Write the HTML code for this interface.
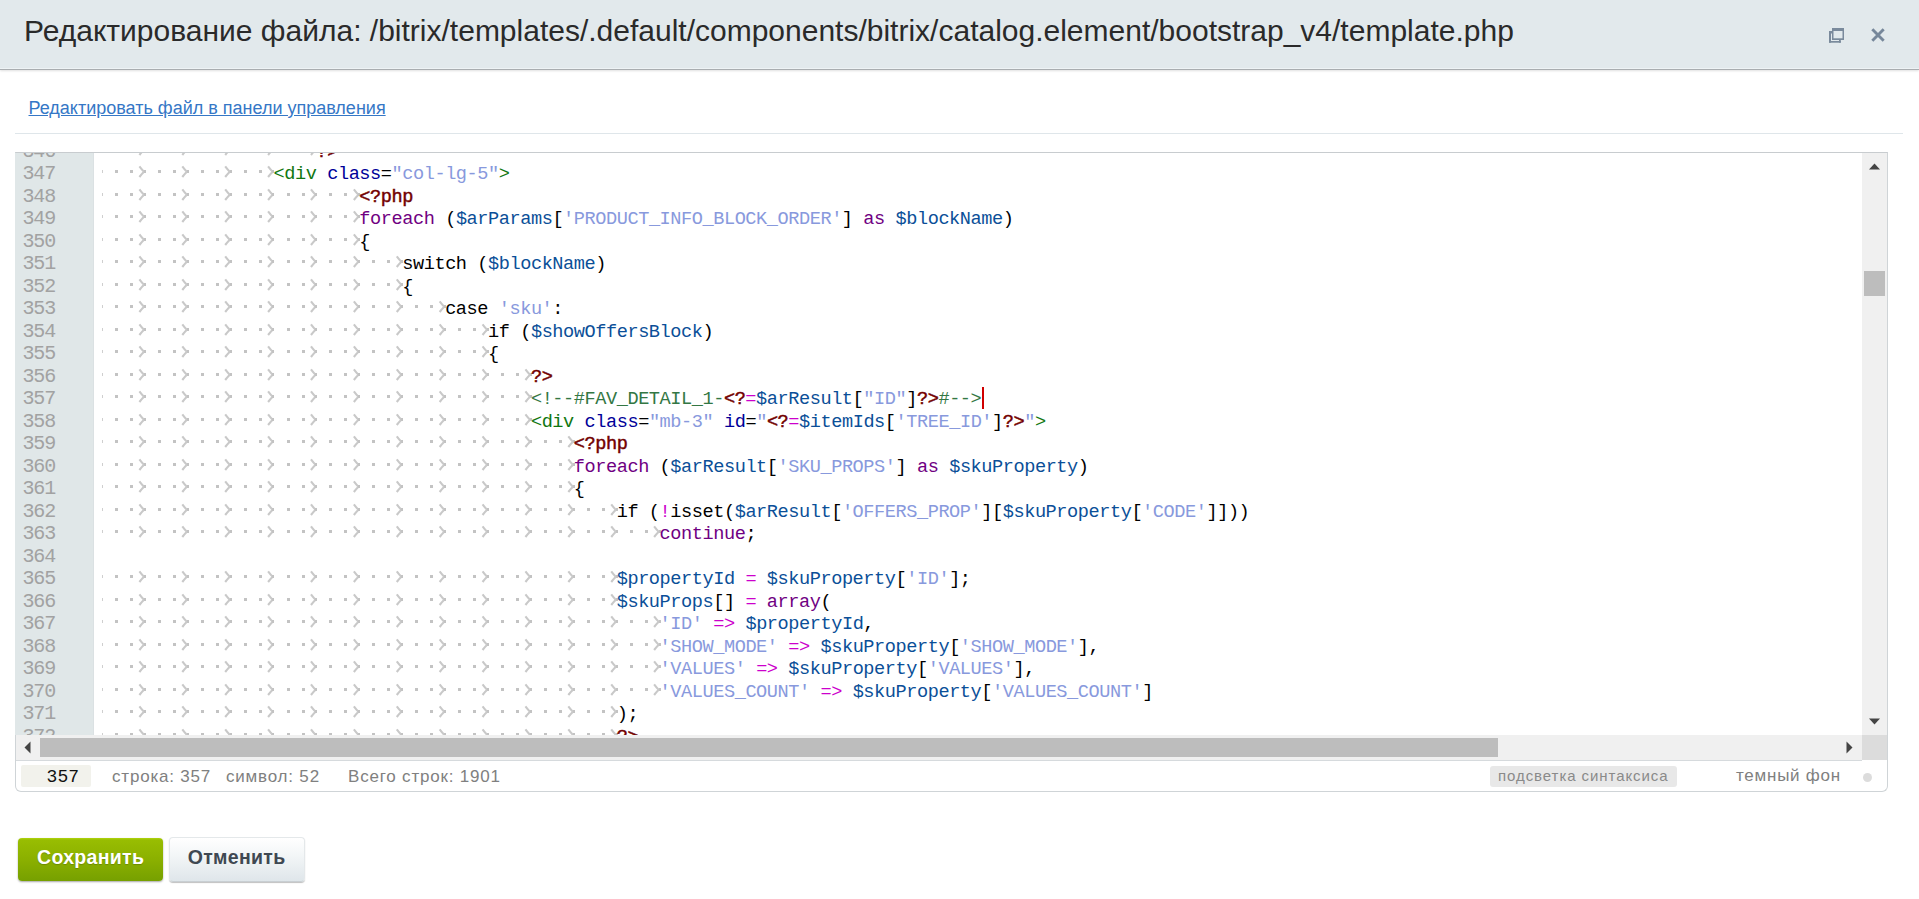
<!DOCTYPE html>
<html><head><meta charset="utf-8"><style>
html,body{margin:0;padding:0;background:#fff;width:1919px;height:899px;overflow:hidden;position:relative;font-family:"Liberation Sans",sans-serif}
.hdr{position:absolute;left:0;top:0;width:1919px;height:69px;background:#e2e9ec;border-bottom:1px solid #a9adb0;box-shadow:0 1px 2px rgba(0,0,0,0.12), inset 0 -1px 0 #eef3f5}
.title{position:absolute;left:24px;top:13px;font-size:30px;color:#2a2a2a;white-space:nowrap;line-height:36px}
.link{position:absolute;left:28.5px;top:97px;font-size:18px;color:#3577c6;text-decoration:underline;white-space:nowrap;line-height:22px}
.sep{position:absolute;left:15px;top:133px;width:1888px;height:1px;background:#dfe6ea}
.ed{position:absolute;left:15px;top:152px;width:1873px;height:640px;border:1px solid #cfd4d7;border-top-color:#c8cccf;border-radius:0 0 6px 6px;box-sizing:border-box;overflow:hidden}
.view{position:absolute;left:15px;top:153px;width:1847px;height:582px;overflow:hidden}
.gutter{position:absolute;left:0;top:0;width:79px;height:582px;background:#e0e7e8;box-shadow:inset -1px 0 0 #dbe1e3}
.gn{position:absolute;left:7.5px;font-family:"Liberation Mono",monospace;font-size:20px;letter-spacing:-1.15px;color:#a2a2a2;line-height:22.5px;height:22.5px}
.ar{fill:none;stroke:#c9c9c9;stroke-width:2.1}
.ln{position:absolute;white-space:pre;font-family:"Liberation Mono",monospace;font-size:18.6px;letter-spacing:-0.437px;line-height:22.5px;height:22.5px;color:#000}
.tag{color:#117711} .attr{color:#000099} .str{color:#8899dd} .php{color:#720000;-webkit-text-stroke:0.45px #720000} .kw{color:#700082} .var{color:#0b4f98} .op{color:#cc00cc} .p{color:#000} .cm{color:#337744}
.vs{position:absolute;left:1862px;top:153px;width:25px;height:582px;background:#f0f0f0}
.hs{position:absolute;left:16px;top:735px;width:1846px;height:25px;background:#f0f0f0;border-bottom:1px solid #d6dadd}
.corner{position:absolute;left:1862px;top:735px;width:25px;height:25px;background:#dcdcdc}
.status{position:absolute;left:16px;top:760px;width:1870px;height:31px}
.btn{position:absolute;font-weight:bold;font-size:19.5px;text-align:center;border-radius:4px;line-height:38px;letter-spacing:0.3px;text-indent:0.3px;box-sizing:border-box}
.save{left:18px;top:838px;width:145px;height:43px;color:#fff;background:linear-gradient(#b0d40c 0px,#98bd02 2px,#8bb000 50%,#76a000);box-shadow:0 1px 2px rgba(0,0,0,0.35);text-shadow:0 1px 1px rgba(0,0,0,0.2)}
.cancel{left:168.5px;top:837px;width:136px;height:45px;color:#3f4852;background:linear-gradient(#ffffff,#f3f6f7 40%,#dfe6ea);border:1px solid #e4e8ea;border-bottom-color:#c9cfd3;box-shadow:0 1px 1px rgba(0,0,0,0.25);padding-top:0px}
.stbox{position:absolute;left:21px;top:765px;width:70px;height:22px;background:#f2f2ec;border-radius:2px;font-family:"Liberation Mono",monospace;font-size:18px;line-height:24px;color:#111;text-align:right;box-sizing:border-box;padding-right:12px}
.st{position:absolute;top:766px;font-size:17px;line-height:22px;color:#808080;white-space:nowrap;letter-spacing:0.8px}
.hl{position:absolute;left:1490px;top:766px;width:187px;height:21px;background:#e8e8e8;border-radius:3px;font-size:15px;line-height:19px;color:#8a8a8a;box-sizing:border-box;padding-left:8px;letter-spacing:0.93px;white-space:nowrap}
</style></head><body>
<div class="hdr"><div class="title">Редактирование файла: /bitrix/templates/.default/components/bitrix/catalog.element/bootstrap_v4/template.php</div>
<svg style="position:absolute;left:1828px;top:27px" width="18" height="17"><g fill="#7a8a9c"><rect x="4" y="1" width="12" height="3"/><rect x="4" y="1" width="1.5" height="12"/><rect x="14.5" y="1" width="1.5" height="12"/><rect x="4" y="11.3" width="12" height="1.7"/><rect x="1" y="4" width="2" height="11.7"/><rect x="1" y="14" width="11.8" height="1.7"/><rect x="11" y="13" width="1.8" height="2.7"/><rect x="1" y="4" width="3" height="2.5"/></g></svg>
<svg style="position:absolute;left:1868px;top:25px" width="20" height="20"><path d="M4.3 4.3 L15.7 15.7 M15.7 4.3 L4.3 15.7" stroke="#76879a" stroke-width="2.9"/></svg>
</div>
<div class="link">Редактировать файл в панели управления</div>
<div class="sep"></div>
<div class="ed"></div>
<div class="view">
<div class="gutter"></div>
<div class="gn" style="top:-12px">346</div><div class="gn" style="top:10px">347</div><div class="gn" style="top:33px">348</div><div class="gn" style="top:55px">349</div><div class="gn" style="top:78px">350</div><div class="gn" style="top:100px">351</div><div class="gn" style="top:123px">352</div><div class="gn" style="top:145px">353</div><div class="gn" style="top:168px">354</div><div class="gn" style="top:190px">355</div><div class="gn" style="top:213px">356</div><div class="gn" style="top:235px">357</div><div class="gn" style="top:258px">358</div><div class="gn" style="top:280px">359</div><div class="gn" style="top:303px">360</div><div class="gn" style="top:325px">361</div><div class="gn" style="top:348px">362</div><div class="gn" style="top:370px">363</div><div class="gn" style="top:393px">364</div><div class="gn" style="top:415px">365</div><div class="gn" style="top:438px">366</div><div class="gn" style="top:460px">367</div><div class="gn" style="top:483px">368</div><div class="gn" style="top:505px">369</div><div class="gn" style="top:528px">370</div><div class="gn" style="top:550px">371</div><div class="gn" style="top:573px">372</div>
<svg style="position:absolute;left:0;top:0" width="1847" height="582"><g fill="#c3c3c3"><rect x="87" y="-5" width="1" height="3" fill="#cfcfcf"/><rect x="100" y="-5" width="3" height="3"/><rect x="115" y="-5" width="3" height="3"/><path d="M124.40 -8.60 Q126.80 -5.40 129.00 -3.30 Q126.80 -1.20 124.40 2.00" class="ar"/><rect x="129" y="-5" width="2" height="3"/><rect x="143" y="-5" width="3" height="3"/><rect x="158" y="-5" width="3" height="3"/><path d="M167.29 -8.60 Q169.69 -5.40 171.89 -3.30 Q169.69 -1.20 167.29 2.00" class="ar"/><rect x="172" y="-5" width="2" height="3"/><rect x="186" y="-5" width="3" height="3"/><rect x="201" y="-5" width="3" height="3"/><path d="M210.19 -8.60 Q212.59 -5.40 214.79 -3.30 Q212.59 -1.20 210.19 2.00" class="ar"/><rect x="215" y="-5" width="2" height="3"/><rect x="229" y="-5" width="3" height="3"/><rect x="244" y="-5" width="3" height="3"/><path d="M253.08 -8.60 Q255.48 -5.40 257.68 -3.30 Q255.48 -1.20 253.08 2.00" class="ar"/><rect x="257" y="-5" width="2" height="3"/><rect x="272" y="-5" width="3" height="3"/><rect x="287" y="-5" width="3" height="3"/><path d="M295.97 -8.60 Q298.37 -5.40 300.57 -3.30 Q298.37 -1.20 295.97 2.00" class="ar"/><rect x="300" y="-5" width="2" height="3"/><rect x="87" y="17" width="1" height="3" fill="#cfcfcf"/><rect x="100" y="17" width="3" height="3"/><rect x="115" y="17" width="3" height="3"/><path d="M124.40 13.40 Q126.80 16.60 129.00 18.70 Q126.80 20.80 124.40 24.00" class="ar"/><rect x="129" y="17" width="2" height="3"/><rect x="143" y="17" width="3" height="3"/><rect x="158" y="17" width="3" height="3"/><path d="M167.29 13.40 Q169.69 16.60 171.89 18.70 Q169.69 20.80 167.29 24.00" class="ar"/><rect x="172" y="17" width="2" height="3"/><rect x="186" y="17" width="3" height="3"/><rect x="201" y="17" width="3" height="3"/><path d="M210.19 13.40 Q212.59 16.60 214.79 18.70 Q212.59 20.80 210.19 24.00" class="ar"/><rect x="215" y="17" width="2" height="3"/><rect x="229" y="17" width="3" height="3"/><rect x="244" y="17" width="3" height="3"/><path d="M253.08 13.40 Q255.48 16.60 257.68 18.70 Q255.48 20.80 253.08 24.00" class="ar"/><rect x="257" y="17" width="2" height="3"/><rect x="87" y="40" width="1" height="3" fill="#cfcfcf"/><rect x="100" y="40" width="3" height="3"/><rect x="115" y="40" width="3" height="3"/><path d="M124.40 36.40 Q126.80 39.60 129.00 41.70 Q126.80 43.80 124.40 47.00" class="ar"/><rect x="129" y="40" width="2" height="3"/><rect x="143" y="40" width="3" height="3"/><rect x="158" y="40" width="3" height="3"/><path d="M167.29 36.40 Q169.69 39.60 171.89 41.70 Q169.69 43.80 167.29 47.00" class="ar"/><rect x="172" y="40" width="2" height="3"/><rect x="186" y="40" width="3" height="3"/><rect x="201" y="40" width="3" height="3"/><path d="M210.19 36.40 Q212.59 39.60 214.79 41.70 Q212.59 43.80 210.19 47.00" class="ar"/><rect x="215" y="40" width="2" height="3"/><rect x="229" y="40" width="3" height="3"/><rect x="244" y="40" width="3" height="3"/><path d="M253.08 36.40 Q255.48 39.60 257.68 41.70 Q255.48 43.80 253.08 47.00" class="ar"/><rect x="257" y="40" width="2" height="3"/><rect x="272" y="40" width="3" height="3"/><rect x="287" y="40" width="3" height="3"/><path d="M295.97 36.40 Q298.37 39.60 300.57 41.70 Q298.37 43.80 295.97 47.00" class="ar"/><rect x="300" y="40" width="2" height="3"/><rect x="314" y="40" width="3" height="3"/><rect x="329" y="40" width="3" height="3"/><path d="M338.86 36.40 Q341.26 39.60 343.46 41.70 Q341.26 43.80 338.86 47.00" class="ar"/><rect x="343" y="40" width="2" height="3"/><rect x="87" y="62" width="1" height="3" fill="#cfcfcf"/><rect x="100" y="62" width="3" height="3"/><rect x="115" y="62" width="3" height="3"/><path d="M124.40 58.40 Q126.80 61.60 129.00 63.70 Q126.80 65.80 124.40 69.00" class="ar"/><rect x="129" y="62" width="2" height="3"/><rect x="143" y="62" width="3" height="3"/><rect x="158" y="62" width="3" height="3"/><path d="M167.29 58.40 Q169.69 61.60 171.89 63.70 Q169.69 65.80 167.29 69.00" class="ar"/><rect x="172" y="62" width="2" height="3"/><rect x="186" y="62" width="3" height="3"/><rect x="201" y="62" width="3" height="3"/><path d="M210.19 58.40 Q212.59 61.60 214.79 63.70 Q212.59 65.80 210.19 69.00" class="ar"/><rect x="215" y="62" width="2" height="3"/><rect x="229" y="62" width="3" height="3"/><rect x="244" y="62" width="3" height="3"/><path d="M253.08 58.40 Q255.48 61.60 257.68 63.70 Q255.48 65.80 253.08 69.00" class="ar"/><rect x="257" y="62" width="2" height="3"/><rect x="272" y="62" width="3" height="3"/><rect x="287" y="62" width="3" height="3"/><path d="M295.97 58.40 Q298.37 61.60 300.57 63.70 Q298.37 65.80 295.97 69.00" class="ar"/><rect x="300" y="62" width="2" height="3"/><rect x="314" y="62" width="3" height="3"/><rect x="329" y="62" width="3" height="3"/><path d="M338.86 58.40 Q341.26 61.60 343.46 63.70 Q341.26 65.80 338.86 69.00" class="ar"/><rect x="343" y="62" width="2" height="3"/><rect x="87" y="85" width="1" height="3" fill="#cfcfcf"/><rect x="100" y="85" width="3" height="3"/><rect x="115" y="85" width="3" height="3"/><path d="M124.40 81.40 Q126.80 84.60 129.00 86.70 Q126.80 88.80 124.40 92.00" class="ar"/><rect x="129" y="85" width="2" height="3"/><rect x="143" y="85" width="3" height="3"/><rect x="158" y="85" width="3" height="3"/><path d="M167.29 81.40 Q169.69 84.60 171.89 86.70 Q169.69 88.80 167.29 92.00" class="ar"/><rect x="172" y="85" width="2" height="3"/><rect x="186" y="85" width="3" height="3"/><rect x="201" y="85" width="3" height="3"/><path d="M210.19 81.40 Q212.59 84.60 214.79 86.70 Q212.59 88.80 210.19 92.00" class="ar"/><rect x="215" y="85" width="2" height="3"/><rect x="229" y="85" width="3" height="3"/><rect x="244" y="85" width="3" height="3"/><path d="M253.08 81.40 Q255.48 84.60 257.68 86.70 Q255.48 88.80 253.08 92.00" class="ar"/><rect x="257" y="85" width="2" height="3"/><rect x="272" y="85" width="3" height="3"/><rect x="287" y="85" width="3" height="3"/><path d="M295.97 81.40 Q298.37 84.60 300.57 86.70 Q298.37 88.80 295.97 92.00" class="ar"/><rect x="300" y="85" width="2" height="3"/><rect x="314" y="85" width="3" height="3"/><rect x="329" y="85" width="3" height="3"/><path d="M338.86 81.40 Q341.26 84.60 343.46 86.70 Q341.26 88.80 338.86 92.00" class="ar"/><rect x="343" y="85" width="2" height="3"/><rect x="87" y="107" width="1" height="3" fill="#cfcfcf"/><rect x="100" y="107" width="3" height="3"/><rect x="115" y="107" width="3" height="3"/><path d="M124.40 103.40 Q126.80 106.60 129.00 108.70 Q126.80 110.80 124.40 114.00" class="ar"/><rect x="129" y="107" width="2" height="3"/><rect x="143" y="107" width="3" height="3"/><rect x="158" y="107" width="3" height="3"/><path d="M167.29 103.40 Q169.69 106.60 171.89 108.70 Q169.69 110.80 167.29 114.00" class="ar"/><rect x="172" y="107" width="2" height="3"/><rect x="186" y="107" width="3" height="3"/><rect x="201" y="107" width="3" height="3"/><path d="M210.19 103.40 Q212.59 106.60 214.79 108.70 Q212.59 110.80 210.19 114.00" class="ar"/><rect x="215" y="107" width="2" height="3"/><rect x="229" y="107" width="3" height="3"/><rect x="244" y="107" width="3" height="3"/><path d="M253.08 103.40 Q255.48 106.60 257.68 108.70 Q255.48 110.80 253.08 114.00" class="ar"/><rect x="257" y="107" width="2" height="3"/><rect x="272" y="107" width="3" height="3"/><rect x="287" y="107" width="3" height="3"/><path d="M295.97 103.40 Q298.37 106.60 300.57 108.70 Q298.37 110.80 295.97 114.00" class="ar"/><rect x="300" y="107" width="2" height="3"/><rect x="314" y="107" width="3" height="3"/><rect x="329" y="107" width="3" height="3"/><path d="M338.86 103.40 Q341.26 106.60 343.46 108.70 Q341.26 110.80 338.86 114.00" class="ar"/><rect x="343" y="107" width="2" height="3"/><rect x="357" y="107" width="3" height="3"/><rect x="372" y="107" width="3" height="3"/><path d="M381.76 103.40 Q384.16 106.60 386.36 108.70 Q384.16 110.80 381.76 114.00" class="ar"/><rect x="386" y="107" width="2" height="3"/><rect x="87" y="130" width="1" height="3" fill="#cfcfcf"/><rect x="100" y="130" width="3" height="3"/><rect x="115" y="130" width="3" height="3"/><path d="M124.40 126.40 Q126.80 129.60 129.00 131.70 Q126.80 133.80 124.40 137.00" class="ar"/><rect x="129" y="130" width="2" height="3"/><rect x="143" y="130" width="3" height="3"/><rect x="158" y="130" width="3" height="3"/><path d="M167.29 126.40 Q169.69 129.60 171.89 131.70 Q169.69 133.80 167.29 137.00" class="ar"/><rect x="172" y="130" width="2" height="3"/><rect x="186" y="130" width="3" height="3"/><rect x="201" y="130" width="3" height="3"/><path d="M210.19 126.40 Q212.59 129.60 214.79 131.70 Q212.59 133.80 210.19 137.00" class="ar"/><rect x="215" y="130" width="2" height="3"/><rect x="229" y="130" width="3" height="3"/><rect x="244" y="130" width="3" height="3"/><path d="M253.08 126.40 Q255.48 129.60 257.68 131.70 Q255.48 133.80 253.08 137.00" class="ar"/><rect x="257" y="130" width="2" height="3"/><rect x="272" y="130" width="3" height="3"/><rect x="287" y="130" width="3" height="3"/><path d="M295.97 126.40 Q298.37 129.60 300.57 131.70 Q298.37 133.80 295.97 137.00" class="ar"/><rect x="300" y="130" width="2" height="3"/><rect x="314" y="130" width="3" height="3"/><rect x="329" y="130" width="3" height="3"/><path d="M338.86 126.40 Q341.26 129.60 343.46 131.70 Q341.26 133.80 338.86 137.00" class="ar"/><rect x="343" y="130" width="2" height="3"/><rect x="357" y="130" width="3" height="3"/><rect x="372" y="130" width="3" height="3"/><path d="M381.76 126.40 Q384.16 129.60 386.36 131.70 Q384.16 133.80 381.76 137.00" class="ar"/><rect x="386" y="130" width="2" height="3"/><rect x="87" y="152" width="1" height="3" fill="#cfcfcf"/><rect x="100" y="152" width="3" height="3"/><rect x="115" y="152" width="3" height="3"/><path d="M124.40 148.40 Q126.80 151.60 129.00 153.70 Q126.80 155.80 124.40 159.00" class="ar"/><rect x="129" y="152" width="2" height="3"/><rect x="143" y="152" width="3" height="3"/><rect x="158" y="152" width="3" height="3"/><path d="M167.29 148.40 Q169.69 151.60 171.89 153.70 Q169.69 155.80 167.29 159.00" class="ar"/><rect x="172" y="152" width="2" height="3"/><rect x="186" y="152" width="3" height="3"/><rect x="201" y="152" width="3" height="3"/><path d="M210.19 148.40 Q212.59 151.60 214.79 153.70 Q212.59 155.80 210.19 159.00" class="ar"/><rect x="215" y="152" width="2" height="3"/><rect x="229" y="152" width="3" height="3"/><rect x="244" y="152" width="3" height="3"/><path d="M253.08 148.40 Q255.48 151.60 257.68 153.70 Q255.48 155.80 253.08 159.00" class="ar"/><rect x="257" y="152" width="2" height="3"/><rect x="272" y="152" width="3" height="3"/><rect x="287" y="152" width="3" height="3"/><path d="M295.97 148.40 Q298.37 151.60 300.57 153.70 Q298.37 155.80 295.97 159.00" class="ar"/><rect x="300" y="152" width="2" height="3"/><rect x="314" y="152" width="3" height="3"/><rect x="329" y="152" width="3" height="3"/><path d="M338.86 148.40 Q341.26 151.60 343.46 153.70 Q341.26 155.80 338.86 159.00" class="ar"/><rect x="343" y="152" width="2" height="3"/><rect x="357" y="152" width="3" height="3"/><rect x="372" y="152" width="3" height="3"/><path d="M381.76 148.40 Q384.16 151.60 386.36 153.70 Q384.16 155.80 381.76 159.00" class="ar"/><rect x="386" y="152" width="2" height="3"/><rect x="400" y="152" width="3" height="3"/><rect x="415" y="152" width="3" height="3"/><path d="M424.65 148.40 Q427.05 151.60 429.25 153.70 Q427.05 155.80 424.65 159.00" class="ar"/><rect x="429" y="152" width="2" height="3"/><rect x="87" y="175" width="1" height="3" fill="#cfcfcf"/><rect x="100" y="175" width="3" height="3"/><rect x="115" y="175" width="3" height="3"/><path d="M124.40 171.40 Q126.80 174.60 129.00 176.70 Q126.80 178.80 124.40 182.00" class="ar"/><rect x="129" y="175" width="2" height="3"/><rect x="143" y="175" width="3" height="3"/><rect x="158" y="175" width="3" height="3"/><path d="M167.29 171.40 Q169.69 174.60 171.89 176.70 Q169.69 178.80 167.29 182.00" class="ar"/><rect x="172" y="175" width="2" height="3"/><rect x="186" y="175" width="3" height="3"/><rect x="201" y="175" width="3" height="3"/><path d="M210.19 171.40 Q212.59 174.60 214.79 176.70 Q212.59 178.80 210.19 182.00" class="ar"/><rect x="215" y="175" width="2" height="3"/><rect x="229" y="175" width="3" height="3"/><rect x="244" y="175" width="3" height="3"/><path d="M253.08 171.40 Q255.48 174.60 257.68 176.70 Q255.48 178.80 253.08 182.00" class="ar"/><rect x="257" y="175" width="2" height="3"/><rect x="272" y="175" width="3" height="3"/><rect x="287" y="175" width="3" height="3"/><path d="M295.97 171.40 Q298.37 174.60 300.57 176.70 Q298.37 178.80 295.97 182.00" class="ar"/><rect x="300" y="175" width="2" height="3"/><rect x="314" y="175" width="3" height="3"/><rect x="329" y="175" width="3" height="3"/><path d="M338.86 171.40 Q341.26 174.60 343.46 176.70 Q341.26 178.80 338.86 182.00" class="ar"/><rect x="343" y="175" width="2" height="3"/><rect x="357" y="175" width="3" height="3"/><rect x="372" y="175" width="3" height="3"/><path d="M381.76 171.40 Q384.16 174.60 386.36 176.70 Q384.16 178.80 381.76 182.00" class="ar"/><rect x="386" y="175" width="2" height="3"/><rect x="400" y="175" width="3" height="3"/><rect x="415" y="175" width="3" height="3"/><path d="M424.65 171.40 Q427.05 174.60 429.25 176.70 Q427.05 178.80 424.65 182.00" class="ar"/><rect x="429" y="175" width="2" height="3"/><rect x="443" y="175" width="3" height="3"/><rect x="458" y="175" width="3" height="3"/><path d="M467.54 171.40 Q469.94 174.60 472.14 176.70 Q469.94 178.80 467.54 182.00" class="ar"/><rect x="472" y="175" width="2" height="3"/><rect x="87" y="197" width="1" height="3" fill="#cfcfcf"/><rect x="100" y="197" width="3" height="3"/><rect x="115" y="197" width="3" height="3"/><path d="M124.40 193.40 Q126.80 196.60 129.00 198.70 Q126.80 200.80 124.40 204.00" class="ar"/><rect x="129" y="197" width="2" height="3"/><rect x="143" y="197" width="3" height="3"/><rect x="158" y="197" width="3" height="3"/><path d="M167.29 193.40 Q169.69 196.60 171.89 198.70 Q169.69 200.80 167.29 204.00" class="ar"/><rect x="172" y="197" width="2" height="3"/><rect x="186" y="197" width="3" height="3"/><rect x="201" y="197" width="3" height="3"/><path d="M210.19 193.40 Q212.59 196.60 214.79 198.70 Q212.59 200.80 210.19 204.00" class="ar"/><rect x="215" y="197" width="2" height="3"/><rect x="229" y="197" width="3" height="3"/><rect x="244" y="197" width="3" height="3"/><path d="M253.08 193.40 Q255.48 196.60 257.68 198.70 Q255.48 200.80 253.08 204.00" class="ar"/><rect x="257" y="197" width="2" height="3"/><rect x="272" y="197" width="3" height="3"/><rect x="287" y="197" width="3" height="3"/><path d="M295.97 193.40 Q298.37 196.60 300.57 198.70 Q298.37 200.80 295.97 204.00" class="ar"/><rect x="300" y="197" width="2" height="3"/><rect x="314" y="197" width="3" height="3"/><rect x="329" y="197" width="3" height="3"/><path d="M338.86 193.40 Q341.26 196.60 343.46 198.70 Q341.26 200.80 338.86 204.00" class="ar"/><rect x="343" y="197" width="2" height="3"/><rect x="357" y="197" width="3" height="3"/><rect x="372" y="197" width="3" height="3"/><path d="M381.76 193.40 Q384.16 196.60 386.36 198.70 Q384.16 200.80 381.76 204.00" class="ar"/><rect x="386" y="197" width="2" height="3"/><rect x="400" y="197" width="3" height="3"/><rect x="415" y="197" width="3" height="3"/><path d="M424.65 193.40 Q427.05 196.60 429.25 198.70 Q427.05 200.80 424.65 204.00" class="ar"/><rect x="429" y="197" width="2" height="3"/><rect x="443" y="197" width="3" height="3"/><rect x="458" y="197" width="3" height="3"/><path d="M467.54 193.40 Q469.94 196.60 472.14 198.70 Q469.94 200.80 467.54 204.00" class="ar"/><rect x="472" y="197" width="2" height="3"/><rect x="87" y="220" width="1" height="3" fill="#cfcfcf"/><rect x="100" y="220" width="3" height="3"/><rect x="115" y="220" width="3" height="3"/><path d="M124.40 216.40 Q126.80 219.60 129.00 221.70 Q126.80 223.80 124.40 227.00" class="ar"/><rect x="129" y="220" width="2" height="3"/><rect x="143" y="220" width="3" height="3"/><rect x="158" y="220" width="3" height="3"/><path d="M167.29 216.40 Q169.69 219.60 171.89 221.70 Q169.69 223.80 167.29 227.00" class="ar"/><rect x="172" y="220" width="2" height="3"/><rect x="186" y="220" width="3" height="3"/><rect x="201" y="220" width="3" height="3"/><path d="M210.19 216.40 Q212.59 219.60 214.79 221.70 Q212.59 223.80 210.19 227.00" class="ar"/><rect x="215" y="220" width="2" height="3"/><rect x="229" y="220" width="3" height="3"/><rect x="244" y="220" width="3" height="3"/><path d="M253.08 216.40 Q255.48 219.60 257.68 221.70 Q255.48 223.80 253.08 227.00" class="ar"/><rect x="257" y="220" width="2" height="3"/><rect x="272" y="220" width="3" height="3"/><rect x="287" y="220" width="3" height="3"/><path d="M295.97 216.40 Q298.37 219.60 300.57 221.70 Q298.37 223.80 295.97 227.00" class="ar"/><rect x="300" y="220" width="2" height="3"/><rect x="314" y="220" width="3" height="3"/><rect x="329" y="220" width="3" height="3"/><path d="M338.86 216.40 Q341.26 219.60 343.46 221.70 Q341.26 223.80 338.86 227.00" class="ar"/><rect x="343" y="220" width="2" height="3"/><rect x="357" y="220" width="3" height="3"/><rect x="372" y="220" width="3" height="3"/><path d="M381.76 216.40 Q384.16 219.60 386.36 221.70 Q384.16 223.80 381.76 227.00" class="ar"/><rect x="386" y="220" width="2" height="3"/><rect x="400" y="220" width="3" height="3"/><rect x="415" y="220" width="3" height="3"/><path d="M424.65 216.40 Q427.05 219.60 429.25 221.70 Q427.05 223.80 424.65 227.00" class="ar"/><rect x="429" y="220" width="2" height="3"/><rect x="443" y="220" width="3" height="3"/><rect x="458" y="220" width="3" height="3"/><path d="M467.54 216.40 Q469.94 219.60 472.14 221.70 Q469.94 223.80 467.54 227.00" class="ar"/><rect x="472" y="220" width="2" height="3"/><rect x="486" y="220" width="3" height="3"/><rect x="501" y="220" width="3" height="3"/><path d="M510.44 216.40 Q512.84 219.60 515.04 221.70 Q512.84 223.80 510.44 227.00" class="ar"/><rect x="515" y="220" width="2" height="3"/><rect x="87" y="242" width="1" height="3" fill="#cfcfcf"/><rect x="100" y="242" width="3" height="3"/><rect x="115" y="242" width="3" height="3"/><path d="M124.40 238.40 Q126.80 241.60 129.00 243.70 Q126.80 245.80 124.40 249.00" class="ar"/><rect x="129" y="242" width="2" height="3"/><rect x="143" y="242" width="3" height="3"/><rect x="158" y="242" width="3" height="3"/><path d="M167.29 238.40 Q169.69 241.60 171.89 243.70 Q169.69 245.80 167.29 249.00" class="ar"/><rect x="172" y="242" width="2" height="3"/><rect x="186" y="242" width="3" height="3"/><rect x="201" y="242" width="3" height="3"/><path d="M210.19 238.40 Q212.59 241.60 214.79 243.70 Q212.59 245.80 210.19 249.00" class="ar"/><rect x="215" y="242" width="2" height="3"/><rect x="229" y="242" width="3" height="3"/><rect x="244" y="242" width="3" height="3"/><path d="M253.08 238.40 Q255.48 241.60 257.68 243.70 Q255.48 245.80 253.08 249.00" class="ar"/><rect x="257" y="242" width="2" height="3"/><rect x="272" y="242" width="3" height="3"/><rect x="287" y="242" width="3" height="3"/><path d="M295.97 238.40 Q298.37 241.60 300.57 243.70 Q298.37 245.80 295.97 249.00" class="ar"/><rect x="300" y="242" width="2" height="3"/><rect x="314" y="242" width="3" height="3"/><rect x="329" y="242" width="3" height="3"/><path d="M338.86 238.40 Q341.26 241.60 343.46 243.70 Q341.26 245.80 338.86 249.00" class="ar"/><rect x="343" y="242" width="2" height="3"/><rect x="357" y="242" width="3" height="3"/><rect x="372" y="242" width="3" height="3"/><path d="M381.76 238.40 Q384.16 241.60 386.36 243.70 Q384.16 245.80 381.76 249.00" class="ar"/><rect x="386" y="242" width="2" height="3"/><rect x="400" y="242" width="3" height="3"/><rect x="415" y="242" width="3" height="3"/><path d="M424.65 238.40 Q427.05 241.60 429.25 243.70 Q427.05 245.80 424.65 249.00" class="ar"/><rect x="429" y="242" width="2" height="3"/><rect x="443" y="242" width="3" height="3"/><rect x="458" y="242" width="3" height="3"/><path d="M467.54 238.40 Q469.94 241.60 472.14 243.70 Q469.94 245.80 467.54 249.00" class="ar"/><rect x="472" y="242" width="2" height="3"/><rect x="486" y="242" width="3" height="3"/><rect x="501" y="242" width="3" height="3"/><path d="M510.44 238.40 Q512.84 241.60 515.04 243.70 Q512.84 245.80 510.44 249.00" class="ar"/><rect x="515" y="242" width="2" height="3"/><rect x="87" y="265" width="1" height="3" fill="#cfcfcf"/><rect x="100" y="265" width="3" height="3"/><rect x="115" y="265" width="3" height="3"/><path d="M124.40 261.40 Q126.80 264.60 129.00 266.70 Q126.80 268.80 124.40 272.00" class="ar"/><rect x="129" y="265" width="2" height="3"/><rect x="143" y="265" width="3" height="3"/><rect x="158" y="265" width="3" height="3"/><path d="M167.29 261.40 Q169.69 264.60 171.89 266.70 Q169.69 268.80 167.29 272.00" class="ar"/><rect x="172" y="265" width="2" height="3"/><rect x="186" y="265" width="3" height="3"/><rect x="201" y="265" width="3" height="3"/><path d="M210.19 261.40 Q212.59 264.60 214.79 266.70 Q212.59 268.80 210.19 272.00" class="ar"/><rect x="215" y="265" width="2" height="3"/><rect x="229" y="265" width="3" height="3"/><rect x="244" y="265" width="3" height="3"/><path d="M253.08 261.40 Q255.48 264.60 257.68 266.70 Q255.48 268.80 253.08 272.00" class="ar"/><rect x="257" y="265" width="2" height="3"/><rect x="272" y="265" width="3" height="3"/><rect x="287" y="265" width="3" height="3"/><path d="M295.97 261.40 Q298.37 264.60 300.57 266.70 Q298.37 268.80 295.97 272.00" class="ar"/><rect x="300" y="265" width="2" height="3"/><rect x="314" y="265" width="3" height="3"/><rect x="329" y="265" width="3" height="3"/><path d="M338.86 261.40 Q341.26 264.60 343.46 266.70 Q341.26 268.80 338.86 272.00" class="ar"/><rect x="343" y="265" width="2" height="3"/><rect x="357" y="265" width="3" height="3"/><rect x="372" y="265" width="3" height="3"/><path d="M381.76 261.40 Q384.16 264.60 386.36 266.70 Q384.16 268.80 381.76 272.00" class="ar"/><rect x="386" y="265" width="2" height="3"/><rect x="400" y="265" width="3" height="3"/><rect x="415" y="265" width="3" height="3"/><path d="M424.65 261.40 Q427.05 264.60 429.25 266.70 Q427.05 268.80 424.65 272.00" class="ar"/><rect x="429" y="265" width="2" height="3"/><rect x="443" y="265" width="3" height="3"/><rect x="458" y="265" width="3" height="3"/><path d="M467.54 261.40 Q469.94 264.60 472.14 266.70 Q469.94 268.80 467.54 272.00" class="ar"/><rect x="472" y="265" width="2" height="3"/><rect x="486" y="265" width="3" height="3"/><rect x="501" y="265" width="3" height="3"/><path d="M510.44 261.40 Q512.84 264.60 515.04 266.70 Q512.84 268.80 510.44 272.00" class="ar"/><rect x="515" y="265" width="2" height="3"/><rect x="87" y="287" width="1" height="3" fill="#cfcfcf"/><rect x="100" y="287" width="3" height="3"/><rect x="115" y="287" width="3" height="3"/><path d="M124.40 283.40 Q126.80 286.60 129.00 288.70 Q126.80 290.80 124.40 294.00" class="ar"/><rect x="129" y="287" width="2" height="3"/><rect x="143" y="287" width="3" height="3"/><rect x="158" y="287" width="3" height="3"/><path d="M167.29 283.40 Q169.69 286.60 171.89 288.70 Q169.69 290.80 167.29 294.00" class="ar"/><rect x="172" y="287" width="2" height="3"/><rect x="186" y="287" width="3" height="3"/><rect x="201" y="287" width="3" height="3"/><path d="M210.19 283.40 Q212.59 286.60 214.79 288.70 Q212.59 290.80 210.19 294.00" class="ar"/><rect x="215" y="287" width="2" height="3"/><rect x="229" y="287" width="3" height="3"/><rect x="244" y="287" width="3" height="3"/><path d="M253.08 283.40 Q255.48 286.60 257.68 288.70 Q255.48 290.80 253.08 294.00" class="ar"/><rect x="257" y="287" width="2" height="3"/><rect x="272" y="287" width="3" height="3"/><rect x="287" y="287" width="3" height="3"/><path d="M295.97 283.40 Q298.37 286.60 300.57 288.70 Q298.37 290.80 295.97 294.00" class="ar"/><rect x="300" y="287" width="2" height="3"/><rect x="314" y="287" width="3" height="3"/><rect x="329" y="287" width="3" height="3"/><path d="M338.86 283.40 Q341.26 286.60 343.46 288.70 Q341.26 290.80 338.86 294.00" class="ar"/><rect x="343" y="287" width="2" height="3"/><rect x="357" y="287" width="3" height="3"/><rect x="372" y="287" width="3" height="3"/><path d="M381.76 283.40 Q384.16 286.60 386.36 288.70 Q384.16 290.80 381.76 294.00" class="ar"/><rect x="386" y="287" width="2" height="3"/><rect x="400" y="287" width="3" height="3"/><rect x="415" y="287" width="3" height="3"/><path d="M424.65 283.40 Q427.05 286.60 429.25 288.70 Q427.05 290.80 424.65 294.00" class="ar"/><rect x="429" y="287" width="2" height="3"/><rect x="443" y="287" width="3" height="3"/><rect x="458" y="287" width="3" height="3"/><path d="M467.54 283.40 Q469.94 286.60 472.14 288.70 Q469.94 290.80 467.54 294.00" class="ar"/><rect x="472" y="287" width="2" height="3"/><rect x="486" y="287" width="3" height="3"/><rect x="501" y="287" width="3" height="3"/><path d="M510.44 283.40 Q512.84 286.60 515.04 288.70 Q512.84 290.80 510.44 294.00" class="ar"/><rect x="515" y="287" width="2" height="3"/><rect x="529" y="287" width="3" height="3"/><rect x="544" y="287" width="3" height="3"/><path d="M553.33 283.40 Q555.73 286.60 557.93 288.70 Q555.73 290.80 553.33 294.00" class="ar"/><rect x="558" y="287" width="2" height="3"/><rect x="87" y="310" width="1" height="3" fill="#cfcfcf"/><rect x="100" y="310" width="3" height="3"/><rect x="115" y="310" width="3" height="3"/><path d="M124.40 306.40 Q126.80 309.60 129.00 311.70 Q126.80 313.80 124.40 317.00" class="ar"/><rect x="129" y="310" width="2" height="3"/><rect x="143" y="310" width="3" height="3"/><rect x="158" y="310" width="3" height="3"/><path d="M167.29 306.40 Q169.69 309.60 171.89 311.70 Q169.69 313.80 167.29 317.00" class="ar"/><rect x="172" y="310" width="2" height="3"/><rect x="186" y="310" width="3" height="3"/><rect x="201" y="310" width="3" height="3"/><path d="M210.19 306.40 Q212.59 309.60 214.79 311.70 Q212.59 313.80 210.19 317.00" class="ar"/><rect x="215" y="310" width="2" height="3"/><rect x="229" y="310" width="3" height="3"/><rect x="244" y="310" width="3" height="3"/><path d="M253.08 306.40 Q255.48 309.60 257.68 311.70 Q255.48 313.80 253.08 317.00" class="ar"/><rect x="257" y="310" width="2" height="3"/><rect x="272" y="310" width="3" height="3"/><rect x="287" y="310" width="3" height="3"/><path d="M295.97 306.40 Q298.37 309.60 300.57 311.70 Q298.37 313.80 295.97 317.00" class="ar"/><rect x="300" y="310" width="2" height="3"/><rect x="314" y="310" width="3" height="3"/><rect x="329" y="310" width="3" height="3"/><path d="M338.86 306.40 Q341.26 309.60 343.46 311.70 Q341.26 313.80 338.86 317.00" class="ar"/><rect x="343" y="310" width="2" height="3"/><rect x="357" y="310" width="3" height="3"/><rect x="372" y="310" width="3" height="3"/><path d="M381.76 306.40 Q384.16 309.60 386.36 311.70 Q384.16 313.80 381.76 317.00" class="ar"/><rect x="386" y="310" width="2" height="3"/><rect x="400" y="310" width="3" height="3"/><rect x="415" y="310" width="3" height="3"/><path d="M424.65 306.40 Q427.05 309.60 429.25 311.70 Q427.05 313.80 424.65 317.00" class="ar"/><rect x="429" y="310" width="2" height="3"/><rect x="443" y="310" width="3" height="3"/><rect x="458" y="310" width="3" height="3"/><path d="M467.54 306.40 Q469.94 309.60 472.14 311.70 Q469.94 313.80 467.54 317.00" class="ar"/><rect x="472" y="310" width="2" height="3"/><rect x="486" y="310" width="3" height="3"/><rect x="501" y="310" width="3" height="3"/><path d="M510.44 306.40 Q512.84 309.60 515.04 311.70 Q512.84 313.80 510.44 317.00" class="ar"/><rect x="515" y="310" width="2" height="3"/><rect x="529" y="310" width="3" height="3"/><rect x="544" y="310" width="3" height="3"/><path d="M553.33 306.40 Q555.73 309.60 557.93 311.70 Q555.73 313.80 553.33 317.00" class="ar"/><rect x="558" y="310" width="2" height="3"/><rect x="87" y="332" width="1" height="3" fill="#cfcfcf"/><rect x="100" y="332" width="3" height="3"/><rect x="115" y="332" width="3" height="3"/><path d="M124.40 328.40 Q126.80 331.60 129.00 333.70 Q126.80 335.80 124.40 339.00" class="ar"/><rect x="129" y="332" width="2" height="3"/><rect x="143" y="332" width="3" height="3"/><rect x="158" y="332" width="3" height="3"/><path d="M167.29 328.40 Q169.69 331.60 171.89 333.70 Q169.69 335.80 167.29 339.00" class="ar"/><rect x="172" y="332" width="2" height="3"/><rect x="186" y="332" width="3" height="3"/><rect x="201" y="332" width="3" height="3"/><path d="M210.19 328.40 Q212.59 331.60 214.79 333.70 Q212.59 335.80 210.19 339.00" class="ar"/><rect x="215" y="332" width="2" height="3"/><rect x="229" y="332" width="3" height="3"/><rect x="244" y="332" width="3" height="3"/><path d="M253.08 328.40 Q255.48 331.60 257.68 333.70 Q255.48 335.80 253.08 339.00" class="ar"/><rect x="257" y="332" width="2" height="3"/><rect x="272" y="332" width="3" height="3"/><rect x="287" y="332" width="3" height="3"/><path d="M295.97 328.40 Q298.37 331.60 300.57 333.70 Q298.37 335.80 295.97 339.00" class="ar"/><rect x="300" y="332" width="2" height="3"/><rect x="314" y="332" width="3" height="3"/><rect x="329" y="332" width="3" height="3"/><path d="M338.86 328.40 Q341.26 331.60 343.46 333.70 Q341.26 335.80 338.86 339.00" class="ar"/><rect x="343" y="332" width="2" height="3"/><rect x="357" y="332" width="3" height="3"/><rect x="372" y="332" width="3" height="3"/><path d="M381.76 328.40 Q384.16 331.60 386.36 333.70 Q384.16 335.80 381.76 339.00" class="ar"/><rect x="386" y="332" width="2" height="3"/><rect x="400" y="332" width="3" height="3"/><rect x="415" y="332" width="3" height="3"/><path d="M424.65 328.40 Q427.05 331.60 429.25 333.70 Q427.05 335.80 424.65 339.00" class="ar"/><rect x="429" y="332" width="2" height="3"/><rect x="443" y="332" width="3" height="3"/><rect x="458" y="332" width="3" height="3"/><path d="M467.54 328.40 Q469.94 331.60 472.14 333.70 Q469.94 335.80 467.54 339.00" class="ar"/><rect x="472" y="332" width="2" height="3"/><rect x="486" y="332" width="3" height="3"/><rect x="501" y="332" width="3" height="3"/><path d="M510.44 328.40 Q512.84 331.60 515.04 333.70 Q512.84 335.80 510.44 339.00" class="ar"/><rect x="515" y="332" width="2" height="3"/><rect x="529" y="332" width="3" height="3"/><rect x="544" y="332" width="3" height="3"/><path d="M553.33 328.40 Q555.73 331.60 557.93 333.70 Q555.73 335.80 553.33 339.00" class="ar"/><rect x="558" y="332" width="2" height="3"/><rect x="87" y="355" width="1" height="3" fill="#cfcfcf"/><rect x="100" y="355" width="3" height="3"/><rect x="115" y="355" width="3" height="3"/><path d="M124.40 351.40 Q126.80 354.60 129.00 356.70 Q126.80 358.80 124.40 362.00" class="ar"/><rect x="129" y="355" width="2" height="3"/><rect x="143" y="355" width="3" height="3"/><rect x="158" y="355" width="3" height="3"/><path d="M167.29 351.40 Q169.69 354.60 171.89 356.70 Q169.69 358.80 167.29 362.00" class="ar"/><rect x="172" y="355" width="2" height="3"/><rect x="186" y="355" width="3" height="3"/><rect x="201" y="355" width="3" height="3"/><path d="M210.19 351.40 Q212.59 354.60 214.79 356.70 Q212.59 358.80 210.19 362.00" class="ar"/><rect x="215" y="355" width="2" height="3"/><rect x="229" y="355" width="3" height="3"/><rect x="244" y="355" width="3" height="3"/><path d="M253.08 351.40 Q255.48 354.60 257.68 356.70 Q255.48 358.80 253.08 362.00" class="ar"/><rect x="257" y="355" width="2" height="3"/><rect x="272" y="355" width="3" height="3"/><rect x="287" y="355" width="3" height="3"/><path d="M295.97 351.40 Q298.37 354.60 300.57 356.70 Q298.37 358.80 295.97 362.00" class="ar"/><rect x="300" y="355" width="2" height="3"/><rect x="314" y="355" width="3" height="3"/><rect x="329" y="355" width="3" height="3"/><path d="M338.86 351.40 Q341.26 354.60 343.46 356.70 Q341.26 358.80 338.86 362.00" class="ar"/><rect x="343" y="355" width="2" height="3"/><rect x="357" y="355" width="3" height="3"/><rect x="372" y="355" width="3" height="3"/><path d="M381.76 351.40 Q384.16 354.60 386.36 356.70 Q384.16 358.80 381.76 362.00" class="ar"/><rect x="386" y="355" width="2" height="3"/><rect x="400" y="355" width="3" height="3"/><rect x="415" y="355" width="3" height="3"/><path d="M424.65 351.40 Q427.05 354.60 429.25 356.70 Q427.05 358.80 424.65 362.00" class="ar"/><rect x="429" y="355" width="2" height="3"/><rect x="443" y="355" width="3" height="3"/><rect x="458" y="355" width="3" height="3"/><path d="M467.54 351.40 Q469.94 354.60 472.14 356.70 Q469.94 358.80 467.54 362.00" class="ar"/><rect x="472" y="355" width="2" height="3"/><rect x="486" y="355" width="3" height="3"/><rect x="501" y="355" width="3" height="3"/><path d="M510.44 351.40 Q512.84 354.60 515.04 356.70 Q512.84 358.80 510.44 362.00" class="ar"/><rect x="515" y="355" width="2" height="3"/><rect x="529" y="355" width="3" height="3"/><rect x="544" y="355" width="3" height="3"/><path d="M553.33 351.40 Q555.73 354.60 557.93 356.70 Q555.73 358.80 553.33 362.00" class="ar"/><rect x="558" y="355" width="2" height="3"/><rect x="572" y="355" width="3" height="3"/><rect x="587" y="355" width="3" height="3"/><path d="M596.22 351.40 Q598.62 354.60 600.82 356.70 Q598.62 358.80 596.22 362.00" class="ar"/><rect x="601" y="355" width="2" height="3"/><rect x="87" y="377" width="1" height="3" fill="#cfcfcf"/><rect x="100" y="377" width="3" height="3"/><rect x="115" y="377" width="3" height="3"/><path d="M124.40 373.40 Q126.80 376.60 129.00 378.70 Q126.80 380.80 124.40 384.00" class="ar"/><rect x="129" y="377" width="2" height="3"/><rect x="143" y="377" width="3" height="3"/><rect x="158" y="377" width="3" height="3"/><path d="M167.29 373.40 Q169.69 376.60 171.89 378.70 Q169.69 380.80 167.29 384.00" class="ar"/><rect x="172" y="377" width="2" height="3"/><rect x="186" y="377" width="3" height="3"/><rect x="201" y="377" width="3" height="3"/><path d="M210.19 373.40 Q212.59 376.60 214.79 378.70 Q212.59 380.80 210.19 384.00" class="ar"/><rect x="215" y="377" width="2" height="3"/><rect x="229" y="377" width="3" height="3"/><rect x="244" y="377" width="3" height="3"/><path d="M253.08 373.40 Q255.48 376.60 257.68 378.70 Q255.48 380.80 253.08 384.00" class="ar"/><rect x="257" y="377" width="2" height="3"/><rect x="272" y="377" width="3" height="3"/><rect x="287" y="377" width="3" height="3"/><path d="M295.97 373.40 Q298.37 376.60 300.57 378.70 Q298.37 380.80 295.97 384.00" class="ar"/><rect x="300" y="377" width="2" height="3"/><rect x="314" y="377" width="3" height="3"/><rect x="329" y="377" width="3" height="3"/><path d="M338.86 373.40 Q341.26 376.60 343.46 378.70 Q341.26 380.80 338.86 384.00" class="ar"/><rect x="343" y="377" width="2" height="3"/><rect x="357" y="377" width="3" height="3"/><rect x="372" y="377" width="3" height="3"/><path d="M381.76 373.40 Q384.16 376.60 386.36 378.70 Q384.16 380.80 381.76 384.00" class="ar"/><rect x="386" y="377" width="2" height="3"/><rect x="400" y="377" width="3" height="3"/><rect x="415" y="377" width="3" height="3"/><path d="M424.65 373.40 Q427.05 376.60 429.25 378.70 Q427.05 380.80 424.65 384.00" class="ar"/><rect x="429" y="377" width="2" height="3"/><rect x="443" y="377" width="3" height="3"/><rect x="458" y="377" width="3" height="3"/><path d="M467.54 373.40 Q469.94 376.60 472.14 378.70 Q469.94 380.80 467.54 384.00" class="ar"/><rect x="472" y="377" width="2" height="3"/><rect x="486" y="377" width="3" height="3"/><rect x="501" y="377" width="3" height="3"/><path d="M510.44 373.40 Q512.84 376.60 515.04 378.70 Q512.84 380.80 510.44 384.00" class="ar"/><rect x="515" y="377" width="2" height="3"/><rect x="529" y="377" width="3" height="3"/><rect x="544" y="377" width="3" height="3"/><path d="M553.33 373.40 Q555.73 376.60 557.93 378.70 Q555.73 380.80 553.33 384.00" class="ar"/><rect x="558" y="377" width="2" height="3"/><rect x="572" y="377" width="3" height="3"/><rect x="587" y="377" width="3" height="3"/><path d="M596.22 373.40 Q598.62 376.60 600.82 378.70 Q598.62 380.80 596.22 384.00" class="ar"/><rect x="601" y="377" width="2" height="3"/><rect x="615" y="377" width="3" height="3"/><rect x="630" y="377" width="3" height="3"/><path d="M639.11 373.40 Q641.51 376.60 643.71 378.70 Q641.51 380.80 639.11 384.00" class="ar"/><rect x="644" y="377" width="2" height="3"/><rect x="87" y="422" width="1" height="3" fill="#cfcfcf"/><rect x="100" y="422" width="3" height="3"/><rect x="115" y="422" width="3" height="3"/><path d="M124.40 418.40 Q126.80 421.60 129.00 423.70 Q126.80 425.80 124.40 429.00" class="ar"/><rect x="129" y="422" width="2" height="3"/><rect x="143" y="422" width="3" height="3"/><rect x="158" y="422" width="3" height="3"/><path d="M167.29 418.40 Q169.69 421.60 171.89 423.70 Q169.69 425.80 167.29 429.00" class="ar"/><rect x="172" y="422" width="2" height="3"/><rect x="186" y="422" width="3" height="3"/><rect x="201" y="422" width="3" height="3"/><path d="M210.19 418.40 Q212.59 421.60 214.79 423.70 Q212.59 425.80 210.19 429.00" class="ar"/><rect x="215" y="422" width="2" height="3"/><rect x="229" y="422" width="3" height="3"/><rect x="244" y="422" width="3" height="3"/><path d="M253.08 418.40 Q255.48 421.60 257.68 423.70 Q255.48 425.80 253.08 429.00" class="ar"/><rect x="257" y="422" width="2" height="3"/><rect x="272" y="422" width="3" height="3"/><rect x="287" y="422" width="3" height="3"/><path d="M295.97 418.40 Q298.37 421.60 300.57 423.70 Q298.37 425.80 295.97 429.00" class="ar"/><rect x="300" y="422" width="2" height="3"/><rect x="314" y="422" width="3" height="3"/><rect x="329" y="422" width="3" height="3"/><path d="M338.86 418.40 Q341.26 421.60 343.46 423.70 Q341.26 425.80 338.86 429.00" class="ar"/><rect x="343" y="422" width="2" height="3"/><rect x="357" y="422" width="3" height="3"/><rect x="372" y="422" width="3" height="3"/><path d="M381.76 418.40 Q384.16 421.60 386.36 423.70 Q384.16 425.80 381.76 429.00" class="ar"/><rect x="386" y="422" width="2" height="3"/><rect x="400" y="422" width="3" height="3"/><rect x="415" y="422" width="3" height="3"/><path d="M424.65 418.40 Q427.05 421.60 429.25 423.70 Q427.05 425.80 424.65 429.00" class="ar"/><rect x="429" y="422" width="2" height="3"/><rect x="443" y="422" width="3" height="3"/><rect x="458" y="422" width="3" height="3"/><path d="M467.54 418.40 Q469.94 421.60 472.14 423.70 Q469.94 425.80 467.54 429.00" class="ar"/><rect x="472" y="422" width="2" height="3"/><rect x="486" y="422" width="3" height="3"/><rect x="501" y="422" width="3" height="3"/><path d="M510.44 418.40 Q512.84 421.60 515.04 423.70 Q512.84 425.80 510.44 429.00" class="ar"/><rect x="515" y="422" width="2" height="3"/><rect x="529" y="422" width="3" height="3"/><rect x="544" y="422" width="3" height="3"/><path d="M553.33 418.40 Q555.73 421.60 557.93 423.70 Q555.73 425.80 553.33 429.00" class="ar"/><rect x="558" y="422" width="2" height="3"/><rect x="572" y="422" width="3" height="3"/><rect x="587" y="422" width="3" height="3"/><path d="M596.22 418.40 Q598.62 421.60 600.82 423.70 Q598.62 425.80 596.22 429.00" class="ar"/><rect x="601" y="422" width="2" height="3"/><rect x="87" y="445" width="1" height="3" fill="#cfcfcf"/><rect x="100" y="445" width="3" height="3"/><rect x="115" y="445" width="3" height="3"/><path d="M124.40 441.40 Q126.80 444.60 129.00 446.70 Q126.80 448.80 124.40 452.00" class="ar"/><rect x="129" y="445" width="2" height="3"/><rect x="143" y="445" width="3" height="3"/><rect x="158" y="445" width="3" height="3"/><path d="M167.29 441.40 Q169.69 444.60 171.89 446.70 Q169.69 448.80 167.29 452.00" class="ar"/><rect x="172" y="445" width="2" height="3"/><rect x="186" y="445" width="3" height="3"/><rect x="201" y="445" width="3" height="3"/><path d="M210.19 441.40 Q212.59 444.60 214.79 446.70 Q212.59 448.80 210.19 452.00" class="ar"/><rect x="215" y="445" width="2" height="3"/><rect x="229" y="445" width="3" height="3"/><rect x="244" y="445" width="3" height="3"/><path d="M253.08 441.40 Q255.48 444.60 257.68 446.70 Q255.48 448.80 253.08 452.00" class="ar"/><rect x="257" y="445" width="2" height="3"/><rect x="272" y="445" width="3" height="3"/><rect x="287" y="445" width="3" height="3"/><path d="M295.97 441.40 Q298.37 444.60 300.57 446.70 Q298.37 448.80 295.97 452.00" class="ar"/><rect x="300" y="445" width="2" height="3"/><rect x="314" y="445" width="3" height="3"/><rect x="329" y="445" width="3" height="3"/><path d="M338.86 441.40 Q341.26 444.60 343.46 446.70 Q341.26 448.80 338.86 452.00" class="ar"/><rect x="343" y="445" width="2" height="3"/><rect x="357" y="445" width="3" height="3"/><rect x="372" y="445" width="3" height="3"/><path d="M381.76 441.40 Q384.16 444.60 386.36 446.70 Q384.16 448.80 381.76 452.00" class="ar"/><rect x="386" y="445" width="2" height="3"/><rect x="400" y="445" width="3" height="3"/><rect x="415" y="445" width="3" height="3"/><path d="M424.65 441.40 Q427.05 444.60 429.25 446.70 Q427.05 448.80 424.65 452.00" class="ar"/><rect x="429" y="445" width="2" height="3"/><rect x="443" y="445" width="3" height="3"/><rect x="458" y="445" width="3" height="3"/><path d="M467.54 441.40 Q469.94 444.60 472.14 446.70 Q469.94 448.80 467.54 452.00" class="ar"/><rect x="472" y="445" width="2" height="3"/><rect x="486" y="445" width="3" height="3"/><rect x="501" y="445" width="3" height="3"/><path d="M510.44 441.40 Q512.84 444.60 515.04 446.70 Q512.84 448.80 510.44 452.00" class="ar"/><rect x="515" y="445" width="2" height="3"/><rect x="529" y="445" width="3" height="3"/><rect x="544" y="445" width="3" height="3"/><path d="M553.33 441.40 Q555.73 444.60 557.93 446.70 Q555.73 448.80 553.33 452.00" class="ar"/><rect x="558" y="445" width="2" height="3"/><rect x="572" y="445" width="3" height="3"/><rect x="587" y="445" width="3" height="3"/><path d="M596.22 441.40 Q598.62 444.60 600.82 446.70 Q598.62 448.80 596.22 452.00" class="ar"/><rect x="601" y="445" width="2" height="3"/><rect x="87" y="467" width="1" height="3" fill="#cfcfcf"/><rect x="100" y="467" width="3" height="3"/><rect x="115" y="467" width="3" height="3"/><path d="M124.40 463.40 Q126.80 466.60 129.00 468.70 Q126.80 470.80 124.40 474.00" class="ar"/><rect x="129" y="467" width="2" height="3"/><rect x="143" y="467" width="3" height="3"/><rect x="158" y="467" width="3" height="3"/><path d="M167.29 463.40 Q169.69 466.60 171.89 468.70 Q169.69 470.80 167.29 474.00" class="ar"/><rect x="172" y="467" width="2" height="3"/><rect x="186" y="467" width="3" height="3"/><rect x="201" y="467" width="3" height="3"/><path d="M210.19 463.40 Q212.59 466.60 214.79 468.70 Q212.59 470.80 210.19 474.00" class="ar"/><rect x="215" y="467" width="2" height="3"/><rect x="229" y="467" width="3" height="3"/><rect x="244" y="467" width="3" height="3"/><path d="M253.08 463.40 Q255.48 466.60 257.68 468.70 Q255.48 470.80 253.08 474.00" class="ar"/><rect x="257" y="467" width="2" height="3"/><rect x="272" y="467" width="3" height="3"/><rect x="287" y="467" width="3" height="3"/><path d="M295.97 463.40 Q298.37 466.60 300.57 468.70 Q298.37 470.80 295.97 474.00" class="ar"/><rect x="300" y="467" width="2" height="3"/><rect x="314" y="467" width="3" height="3"/><rect x="329" y="467" width="3" height="3"/><path d="M338.86 463.40 Q341.26 466.60 343.46 468.70 Q341.26 470.80 338.86 474.00" class="ar"/><rect x="343" y="467" width="2" height="3"/><rect x="357" y="467" width="3" height="3"/><rect x="372" y="467" width="3" height="3"/><path d="M381.76 463.40 Q384.16 466.60 386.36 468.70 Q384.16 470.80 381.76 474.00" class="ar"/><rect x="386" y="467" width="2" height="3"/><rect x="400" y="467" width="3" height="3"/><rect x="415" y="467" width="3" height="3"/><path d="M424.65 463.40 Q427.05 466.60 429.25 468.70 Q427.05 470.80 424.65 474.00" class="ar"/><rect x="429" y="467" width="2" height="3"/><rect x="443" y="467" width="3" height="3"/><rect x="458" y="467" width="3" height="3"/><path d="M467.54 463.40 Q469.94 466.60 472.14 468.70 Q469.94 470.80 467.54 474.00" class="ar"/><rect x="472" y="467" width="2" height="3"/><rect x="486" y="467" width="3" height="3"/><rect x="501" y="467" width="3" height="3"/><path d="M510.44 463.40 Q512.84 466.60 515.04 468.70 Q512.84 470.80 510.44 474.00" class="ar"/><rect x="515" y="467" width="2" height="3"/><rect x="529" y="467" width="3" height="3"/><rect x="544" y="467" width="3" height="3"/><path d="M553.33 463.40 Q555.73 466.60 557.93 468.70 Q555.73 470.80 553.33 474.00" class="ar"/><rect x="558" y="467" width="2" height="3"/><rect x="572" y="467" width="3" height="3"/><rect x="587" y="467" width="3" height="3"/><path d="M596.22 463.40 Q598.62 466.60 600.82 468.70 Q598.62 470.80 596.22 474.00" class="ar"/><rect x="601" y="467" width="2" height="3"/><rect x="615" y="467" width="3" height="3"/><rect x="630" y="467" width="3" height="3"/><path d="M639.11 463.40 Q641.51 466.60 643.71 468.70 Q641.51 470.80 639.11 474.00" class="ar"/><rect x="644" y="467" width="2" height="3"/><rect x="87" y="490" width="1" height="3" fill="#cfcfcf"/><rect x="100" y="490" width="3" height="3"/><rect x="115" y="490" width="3" height="3"/><path d="M124.40 486.40 Q126.80 489.60 129.00 491.70 Q126.80 493.80 124.40 497.00" class="ar"/><rect x="129" y="490" width="2" height="3"/><rect x="143" y="490" width="3" height="3"/><rect x="158" y="490" width="3" height="3"/><path d="M167.29 486.40 Q169.69 489.60 171.89 491.70 Q169.69 493.80 167.29 497.00" class="ar"/><rect x="172" y="490" width="2" height="3"/><rect x="186" y="490" width="3" height="3"/><rect x="201" y="490" width="3" height="3"/><path d="M210.19 486.40 Q212.59 489.60 214.79 491.70 Q212.59 493.80 210.19 497.00" class="ar"/><rect x="215" y="490" width="2" height="3"/><rect x="229" y="490" width="3" height="3"/><rect x="244" y="490" width="3" height="3"/><path d="M253.08 486.40 Q255.48 489.60 257.68 491.70 Q255.48 493.80 253.08 497.00" class="ar"/><rect x="257" y="490" width="2" height="3"/><rect x="272" y="490" width="3" height="3"/><rect x="287" y="490" width="3" height="3"/><path d="M295.97 486.40 Q298.37 489.60 300.57 491.70 Q298.37 493.80 295.97 497.00" class="ar"/><rect x="300" y="490" width="2" height="3"/><rect x="314" y="490" width="3" height="3"/><rect x="329" y="490" width="3" height="3"/><path d="M338.86 486.40 Q341.26 489.60 343.46 491.70 Q341.26 493.80 338.86 497.00" class="ar"/><rect x="343" y="490" width="2" height="3"/><rect x="357" y="490" width="3" height="3"/><rect x="372" y="490" width="3" height="3"/><path d="M381.76 486.40 Q384.16 489.60 386.36 491.70 Q384.16 493.80 381.76 497.00" class="ar"/><rect x="386" y="490" width="2" height="3"/><rect x="400" y="490" width="3" height="3"/><rect x="415" y="490" width="3" height="3"/><path d="M424.65 486.40 Q427.05 489.60 429.25 491.70 Q427.05 493.80 424.65 497.00" class="ar"/><rect x="429" y="490" width="2" height="3"/><rect x="443" y="490" width="3" height="3"/><rect x="458" y="490" width="3" height="3"/><path d="M467.54 486.40 Q469.94 489.60 472.14 491.70 Q469.94 493.80 467.54 497.00" class="ar"/><rect x="472" y="490" width="2" height="3"/><rect x="486" y="490" width="3" height="3"/><rect x="501" y="490" width="3" height="3"/><path d="M510.44 486.40 Q512.84 489.60 515.04 491.70 Q512.84 493.80 510.44 497.00" class="ar"/><rect x="515" y="490" width="2" height="3"/><rect x="529" y="490" width="3" height="3"/><rect x="544" y="490" width="3" height="3"/><path d="M553.33 486.40 Q555.73 489.60 557.93 491.70 Q555.73 493.80 553.33 497.00" class="ar"/><rect x="558" y="490" width="2" height="3"/><rect x="572" y="490" width="3" height="3"/><rect x="587" y="490" width="3" height="3"/><path d="M596.22 486.40 Q598.62 489.60 600.82 491.70 Q598.62 493.80 596.22 497.00" class="ar"/><rect x="601" y="490" width="2" height="3"/><rect x="615" y="490" width="3" height="3"/><rect x="630" y="490" width="3" height="3"/><path d="M639.11 486.40 Q641.51 489.60 643.71 491.70 Q641.51 493.80 639.11 497.00" class="ar"/><rect x="644" y="490" width="2" height="3"/><rect x="87" y="512" width="1" height="3" fill="#cfcfcf"/><rect x="100" y="512" width="3" height="3"/><rect x="115" y="512" width="3" height="3"/><path d="M124.40 508.40 Q126.80 511.60 129.00 513.70 Q126.80 515.80 124.40 519.00" class="ar"/><rect x="129" y="512" width="2" height="3"/><rect x="143" y="512" width="3" height="3"/><rect x="158" y="512" width="3" height="3"/><path d="M167.29 508.40 Q169.69 511.60 171.89 513.70 Q169.69 515.80 167.29 519.00" class="ar"/><rect x="172" y="512" width="2" height="3"/><rect x="186" y="512" width="3" height="3"/><rect x="201" y="512" width="3" height="3"/><path d="M210.19 508.40 Q212.59 511.60 214.79 513.70 Q212.59 515.80 210.19 519.00" class="ar"/><rect x="215" y="512" width="2" height="3"/><rect x="229" y="512" width="3" height="3"/><rect x="244" y="512" width="3" height="3"/><path d="M253.08 508.40 Q255.48 511.60 257.68 513.70 Q255.48 515.80 253.08 519.00" class="ar"/><rect x="257" y="512" width="2" height="3"/><rect x="272" y="512" width="3" height="3"/><rect x="287" y="512" width="3" height="3"/><path d="M295.97 508.40 Q298.37 511.60 300.57 513.70 Q298.37 515.80 295.97 519.00" class="ar"/><rect x="300" y="512" width="2" height="3"/><rect x="314" y="512" width="3" height="3"/><rect x="329" y="512" width="3" height="3"/><path d="M338.86 508.40 Q341.26 511.60 343.46 513.70 Q341.26 515.80 338.86 519.00" class="ar"/><rect x="343" y="512" width="2" height="3"/><rect x="357" y="512" width="3" height="3"/><rect x="372" y="512" width="3" height="3"/><path d="M381.76 508.40 Q384.16 511.60 386.36 513.70 Q384.16 515.80 381.76 519.00" class="ar"/><rect x="386" y="512" width="2" height="3"/><rect x="400" y="512" width="3" height="3"/><rect x="415" y="512" width="3" height="3"/><path d="M424.65 508.40 Q427.05 511.60 429.25 513.70 Q427.05 515.80 424.65 519.00" class="ar"/><rect x="429" y="512" width="2" height="3"/><rect x="443" y="512" width="3" height="3"/><rect x="458" y="512" width="3" height="3"/><path d="M467.54 508.40 Q469.94 511.60 472.14 513.70 Q469.94 515.80 467.54 519.00" class="ar"/><rect x="472" y="512" width="2" height="3"/><rect x="486" y="512" width="3" height="3"/><rect x="501" y="512" width="3" height="3"/><path d="M510.44 508.40 Q512.84 511.60 515.04 513.70 Q512.84 515.80 510.44 519.00" class="ar"/><rect x="515" y="512" width="2" height="3"/><rect x="529" y="512" width="3" height="3"/><rect x="544" y="512" width="3" height="3"/><path d="M553.33 508.40 Q555.73 511.60 557.93 513.70 Q555.73 515.80 553.33 519.00" class="ar"/><rect x="558" y="512" width="2" height="3"/><rect x="572" y="512" width="3" height="3"/><rect x="587" y="512" width="3" height="3"/><path d="M596.22 508.40 Q598.62 511.60 600.82 513.70 Q598.62 515.80 596.22 519.00" class="ar"/><rect x="601" y="512" width="2" height="3"/><rect x="615" y="512" width="3" height="3"/><rect x="630" y="512" width="3" height="3"/><path d="M639.11 508.40 Q641.51 511.60 643.71 513.70 Q641.51 515.80 639.11 519.00" class="ar"/><rect x="644" y="512" width="2" height="3"/><rect x="87" y="535" width="1" height="3" fill="#cfcfcf"/><rect x="100" y="535" width="3" height="3"/><rect x="115" y="535" width="3" height="3"/><path d="M124.40 531.40 Q126.80 534.60 129.00 536.70 Q126.80 538.80 124.40 542.00" class="ar"/><rect x="129" y="535" width="2" height="3"/><rect x="143" y="535" width="3" height="3"/><rect x="158" y="535" width="3" height="3"/><path d="M167.29 531.40 Q169.69 534.60 171.89 536.70 Q169.69 538.80 167.29 542.00" class="ar"/><rect x="172" y="535" width="2" height="3"/><rect x="186" y="535" width="3" height="3"/><rect x="201" y="535" width="3" height="3"/><path d="M210.19 531.40 Q212.59 534.60 214.79 536.70 Q212.59 538.80 210.19 542.00" class="ar"/><rect x="215" y="535" width="2" height="3"/><rect x="229" y="535" width="3" height="3"/><rect x="244" y="535" width="3" height="3"/><path d="M253.08 531.40 Q255.48 534.60 257.68 536.70 Q255.48 538.80 253.08 542.00" class="ar"/><rect x="257" y="535" width="2" height="3"/><rect x="272" y="535" width="3" height="3"/><rect x="287" y="535" width="3" height="3"/><path d="M295.97 531.40 Q298.37 534.60 300.57 536.70 Q298.37 538.80 295.97 542.00" class="ar"/><rect x="300" y="535" width="2" height="3"/><rect x="314" y="535" width="3" height="3"/><rect x="329" y="535" width="3" height="3"/><path d="M338.86 531.40 Q341.26 534.60 343.46 536.70 Q341.26 538.80 338.86 542.00" class="ar"/><rect x="343" y="535" width="2" height="3"/><rect x="357" y="535" width="3" height="3"/><rect x="372" y="535" width="3" height="3"/><path d="M381.76 531.40 Q384.16 534.60 386.36 536.70 Q384.16 538.80 381.76 542.00" class="ar"/><rect x="386" y="535" width="2" height="3"/><rect x="400" y="535" width="3" height="3"/><rect x="415" y="535" width="3" height="3"/><path d="M424.65 531.40 Q427.05 534.60 429.25 536.70 Q427.05 538.80 424.65 542.00" class="ar"/><rect x="429" y="535" width="2" height="3"/><rect x="443" y="535" width="3" height="3"/><rect x="458" y="535" width="3" height="3"/><path d="M467.54 531.40 Q469.94 534.60 472.14 536.70 Q469.94 538.80 467.54 542.00" class="ar"/><rect x="472" y="535" width="2" height="3"/><rect x="486" y="535" width="3" height="3"/><rect x="501" y="535" width="3" height="3"/><path d="M510.44 531.40 Q512.84 534.60 515.04 536.70 Q512.84 538.80 510.44 542.00" class="ar"/><rect x="515" y="535" width="2" height="3"/><rect x="529" y="535" width="3" height="3"/><rect x="544" y="535" width="3" height="3"/><path d="M553.33 531.40 Q555.73 534.60 557.93 536.70 Q555.73 538.80 553.33 542.00" class="ar"/><rect x="558" y="535" width="2" height="3"/><rect x="572" y="535" width="3" height="3"/><rect x="587" y="535" width="3" height="3"/><path d="M596.22 531.40 Q598.62 534.60 600.82 536.70 Q598.62 538.80 596.22 542.00" class="ar"/><rect x="601" y="535" width="2" height="3"/><rect x="615" y="535" width="3" height="3"/><rect x="630" y="535" width="3" height="3"/><path d="M639.11 531.40 Q641.51 534.60 643.71 536.70 Q641.51 538.80 639.11 542.00" class="ar"/><rect x="644" y="535" width="2" height="3"/><rect x="87" y="557" width="1" height="3" fill="#cfcfcf"/><rect x="100" y="557" width="3" height="3"/><rect x="115" y="557" width="3" height="3"/><path d="M124.40 553.40 Q126.80 556.60 129.00 558.70 Q126.80 560.80 124.40 564.00" class="ar"/><rect x="129" y="557" width="2" height="3"/><rect x="143" y="557" width="3" height="3"/><rect x="158" y="557" width="3" height="3"/><path d="M167.29 553.40 Q169.69 556.60 171.89 558.70 Q169.69 560.80 167.29 564.00" class="ar"/><rect x="172" y="557" width="2" height="3"/><rect x="186" y="557" width="3" height="3"/><rect x="201" y="557" width="3" height="3"/><path d="M210.19 553.40 Q212.59 556.60 214.79 558.70 Q212.59 560.80 210.19 564.00" class="ar"/><rect x="215" y="557" width="2" height="3"/><rect x="229" y="557" width="3" height="3"/><rect x="244" y="557" width="3" height="3"/><path d="M253.08 553.40 Q255.48 556.60 257.68 558.70 Q255.48 560.80 253.08 564.00" class="ar"/><rect x="257" y="557" width="2" height="3"/><rect x="272" y="557" width="3" height="3"/><rect x="287" y="557" width="3" height="3"/><path d="M295.97 553.40 Q298.37 556.60 300.57 558.70 Q298.37 560.80 295.97 564.00" class="ar"/><rect x="300" y="557" width="2" height="3"/><rect x="314" y="557" width="3" height="3"/><rect x="329" y="557" width="3" height="3"/><path d="M338.86 553.40 Q341.26 556.60 343.46 558.70 Q341.26 560.80 338.86 564.00" class="ar"/><rect x="343" y="557" width="2" height="3"/><rect x="357" y="557" width="3" height="3"/><rect x="372" y="557" width="3" height="3"/><path d="M381.76 553.40 Q384.16 556.60 386.36 558.70 Q384.16 560.80 381.76 564.00" class="ar"/><rect x="386" y="557" width="2" height="3"/><rect x="400" y="557" width="3" height="3"/><rect x="415" y="557" width="3" height="3"/><path d="M424.65 553.40 Q427.05 556.60 429.25 558.70 Q427.05 560.80 424.65 564.00" class="ar"/><rect x="429" y="557" width="2" height="3"/><rect x="443" y="557" width="3" height="3"/><rect x="458" y="557" width="3" height="3"/><path d="M467.54 553.40 Q469.94 556.60 472.14 558.70 Q469.94 560.80 467.54 564.00" class="ar"/><rect x="472" y="557" width="2" height="3"/><rect x="486" y="557" width="3" height="3"/><rect x="501" y="557" width="3" height="3"/><path d="M510.44 553.40 Q512.84 556.60 515.04 558.70 Q512.84 560.80 510.44 564.00" class="ar"/><rect x="515" y="557" width="2" height="3"/><rect x="529" y="557" width="3" height="3"/><rect x="544" y="557" width="3" height="3"/><path d="M553.33 553.40 Q555.73 556.60 557.93 558.70 Q555.73 560.80 553.33 564.00" class="ar"/><rect x="558" y="557" width="2" height="3"/><rect x="572" y="557" width="3" height="3"/><rect x="587" y="557" width="3" height="3"/><path d="M596.22 553.40 Q598.62 556.60 600.82 558.70 Q598.62 560.80 596.22 564.00" class="ar"/><rect x="601" y="557" width="2" height="3"/><rect x="87" y="580" width="1" height="3" fill="#cfcfcf"/><rect x="100" y="580" width="3" height="3"/><rect x="115" y="580" width="3" height="3"/><path d="M124.40 576.40 Q126.80 579.60 129.00 581.70 Q126.80 583.80 124.40 587.00" class="ar"/><rect x="129" y="580" width="2" height="3"/><rect x="143" y="580" width="3" height="3"/><rect x="158" y="580" width="3" height="3"/><path d="M167.29 576.40 Q169.69 579.60 171.89 581.70 Q169.69 583.80 167.29 587.00" class="ar"/><rect x="172" y="580" width="2" height="3"/><rect x="186" y="580" width="3" height="3"/><rect x="201" y="580" width="3" height="3"/><path d="M210.19 576.40 Q212.59 579.60 214.79 581.70 Q212.59 583.80 210.19 587.00" class="ar"/><rect x="215" y="580" width="2" height="3"/><rect x="229" y="580" width="3" height="3"/><rect x="244" y="580" width="3" height="3"/><path d="M253.08 576.40 Q255.48 579.60 257.68 581.70 Q255.48 583.80 253.08 587.00" class="ar"/><rect x="257" y="580" width="2" height="3"/><rect x="272" y="580" width="3" height="3"/><rect x="287" y="580" width="3" height="3"/><path d="M295.97 576.40 Q298.37 579.60 300.57 581.70 Q298.37 583.80 295.97 587.00" class="ar"/><rect x="300" y="580" width="2" height="3"/><rect x="314" y="580" width="3" height="3"/><rect x="329" y="580" width="3" height="3"/><path d="M338.86 576.40 Q341.26 579.60 343.46 581.70 Q341.26 583.80 338.86 587.00" class="ar"/><rect x="343" y="580" width="2" height="3"/><rect x="357" y="580" width="3" height="3"/><rect x="372" y="580" width="3" height="3"/><path d="M381.76 576.40 Q384.16 579.60 386.36 581.70 Q384.16 583.80 381.76 587.00" class="ar"/><rect x="386" y="580" width="2" height="3"/><rect x="400" y="580" width="3" height="3"/><rect x="415" y="580" width="3" height="3"/><path d="M424.65 576.40 Q427.05 579.60 429.25 581.70 Q427.05 583.80 424.65 587.00" class="ar"/><rect x="429" y="580" width="2" height="3"/><rect x="443" y="580" width="3" height="3"/><rect x="458" y="580" width="3" height="3"/><path d="M467.54 576.40 Q469.94 579.60 472.14 581.70 Q469.94 583.80 467.54 587.00" class="ar"/><rect x="472" y="580" width="2" height="3"/><rect x="486" y="580" width="3" height="3"/><rect x="501" y="580" width="3" height="3"/><path d="M510.44 576.40 Q512.84 579.60 515.04 581.70 Q512.84 583.80 510.44 587.00" class="ar"/><rect x="515" y="580" width="2" height="3"/><rect x="529" y="580" width="3" height="3"/><rect x="544" y="580" width="3" height="3"/><path d="M553.33 576.40 Q555.73 579.60 557.93 581.70 Q555.73 583.80 553.33 587.00" class="ar"/><rect x="558" y="580" width="2" height="3"/><rect x="572" y="580" width="3" height="3"/><rect x="587" y="580" width="3" height="3"/><path d="M596.22 576.40 Q598.62 579.60 600.82 581.70 Q598.62 583.80 596.22 587.00" class="ar"/><rect x="601" y="580" width="2" height="3"/></g></svg><div class="ln" style="top:-11px;left:301.46px"><span class="php">?&gt;</span></div><div class="ln" style="top:11px;left:258.57px"><span class="tag">&lt;div</span> <span class="attr">class</span><span class="p">=</span><span class="str">&quot;col-lg-5&quot;</span><span class="tag">&gt;</span></div><div class="ln" style="top:34px;left:344.36px"><span class="php">&lt;?php</span></div><div class="ln" style="top:56px;left:344.36px"><span class="kw">foreach</span> (<span class="var">$arParams</span><span class="p">[</span><span class="str">&#x27;PRODUCT_INFO_BLOCK_ORDER&#x27;</span><span class="p">]</span> <span class="kw">as</span> <span class="var">$blockName</span><span class="p">)</span></div><div class="ln" style="top:79px;left:344.36px"><span class="p">{</span></div><div class="ln" style="top:101px;left:387.25px">switch (<span class="var">$blockName</span><span class="p">)</span></div><div class="ln" style="top:124px;left:387.25px"><span class="p">{</span></div><div class="ln" style="top:146px;left:430.14px">case <span class="str">&#x27;sku&#x27;</span><span class="p">:</span></div><div class="ln" style="top:169px;left:473.04px">if (<span class="var">$showOffersBlock</span><span class="p">)</span></div><div class="ln" style="top:191px;left:473.04px"><span class="p">{</span></div><div class="ln" style="top:214px;left:515.93px"><span class="php">?&gt;</span></div><div class="ln" style="top:236px;left:515.93px"><span class="cm">&lt;!--#FAV_DETAIL_1-</span><span class="php">&lt;?</span><span class="op">=</span><span class="var">$arResult</span><span class="p">[</span><span class="str">&quot;ID&quot;</span><span class="p">]</span><span class="php">?&gt;</span><span class="cm">#--&gt;</span></div><div class="ln" style="top:259px;left:515.93px"><span class="tag">&lt;div</span> <span class="attr">class</span><span class="p">=</span><span class="str">&quot;mb-3&quot;</span> <span class="attr">id</span><span class="p">=</span><span class="str">&quot;</span><span class="php">&lt;?</span><span class="op">=</span><span class="var">$itemIds</span><span class="p">[</span><span class="str">&#x27;TREE_ID&#x27;</span><span class="p">]</span><span class="php">?&gt;</span><span class="str">&quot;</span><span class="tag">&gt;</span></div><div class="ln" style="top:281px;left:558.82px"><span class="php">&lt;?php</span></div><div class="ln" style="top:304px;left:558.82px"><span class="kw">foreach</span> (<span class="var">$arResult</span><span class="p">[</span><span class="str">&#x27;SKU_PROPS&#x27;</span><span class="p">]</span> <span class="kw">as</span> <span class="var">$skuProperty</span><span class="p">)</span></div><div class="ln" style="top:326px;left:558.82px"><span class="p">{</span></div><div class="ln" style="top:349px;left:601.71px">if (<span class="op">!</span>isset(<span class="var">$arResult</span><span class="p">[</span><span class="str">&#x27;OFFERS_PROP&#x27;</span><span class="p">][</span><span class="var">$skuProperty</span><span class="p">[</span><span class="str">&#x27;CODE&#x27;</span><span class="p">]]))</span></div><div class="ln" style="top:371px;left:644.61px"><span class="kw">continue</span><span class="p">;</span></div><div class="ln" style="top:416px;left:601.71px"><span class="var">$propertyId</span> <span class="op">=</span> <span class="var">$skuProperty</span><span class="p">[</span><span class="str">&#x27;ID&#x27;</span><span class="p">];</span></div><div class="ln" style="top:439px;left:601.71px"><span class="var">$skuProps</span><span class="p">[]</span> <span class="op">=</span> <span class="kw">array</span><span class="p">(</span></div><div class="ln" style="top:461px;left:644.61px"><span class="str">&#x27;ID&#x27;</span> <span class="op">=&gt;</span> <span class="var">$propertyId</span><span class="p">,</span></div><div class="ln" style="top:484px;left:644.61px"><span class="str">&#x27;SHOW_MODE&#x27;</span> <span class="op">=&gt;</span> <span class="var">$skuProperty</span><span class="p">[</span><span class="str">&#x27;SHOW_MODE&#x27;</span><span class="p">],</span></div><div class="ln" style="top:506px;left:644.61px"><span class="str">&#x27;VALUES&#x27;</span> <span class="op">=&gt;</span> <span class="var">$skuProperty</span><span class="p">[</span><span class="str">&#x27;VALUES&#x27;</span><span class="p">],</span></div><div class="ln" style="top:529px;left:644.61px"><span class="str">&#x27;VALUES_COUNT&#x27;</span> <span class="op">=&gt;</span> <span class="var">$skuProperty</span><span class="p">[</span><span class="str">&#x27;VALUES_COUNT&#x27;</span><span class="p">]</span></div><div class="ln" style="top:551px;left:601.71px"><span class="p">);</span></div><div class="ln" style="top:574px;left:601.71px"><span class="php">?&gt;</span></div>
</div>
<div style="position:absolute;left:981.5px;top:387px;width:2px;height:22px;background:#d00000"></div>
<div class="vs"><svg style="position:absolute;left:6px;top:9px" width="13" height="8"><path d="M1 7.5 L6.5 1.5 L12 7.5 Z" fill="#444"/></svg><div style="position:absolute;left:2px;top:118px;width:21px;height:25px;background:#bdbdbd"></div><svg style="position:absolute;left:6px;top:565px" width="13" height="8"><path d="M1 0.5 L6.5 6.5 L12 0.5 Z" fill="#444"/></svg></div>
<div class="hs"><svg style="position:absolute;left:7px;top:6px" width="8" height="13"><path d="M7.5 0.5 L1.5 6.5 L7.5 12.5 Z" fill="#444"/></svg><div style="position:absolute;left:24px;top:3px;width:1458px;height:19px;background:#bdbdbd"></div><svg style="position:absolute;left:1830px;top:6px" width="8" height="13"><path d="M0.5 0.5 L6.5 6.5 L0.5 12.5 Z" fill="#444"/></svg></div>
<div class="corner"></div>
<div class="stbox">357</div>
<div class="st" style="left:112px">строка: 357</div>
<div class="st" style="left:226px">символ: 52</div>
<div class="st" style="left:348px">Всего строк: 1901</div>
<div class="hl">подсветка синтаксиса</div>
<div class="st" style="left:1736px;top:765px;letter-spacing:0.75px">темный фон</div>
<div style="position:absolute;left:1863px;top:773px;width:9px;height:9px;border-radius:50%;background:#dcdcdc"></div>
<div class="btn save">Сохранить</div>
<div class="btn cancel">Отменить</div>
</body></html>
